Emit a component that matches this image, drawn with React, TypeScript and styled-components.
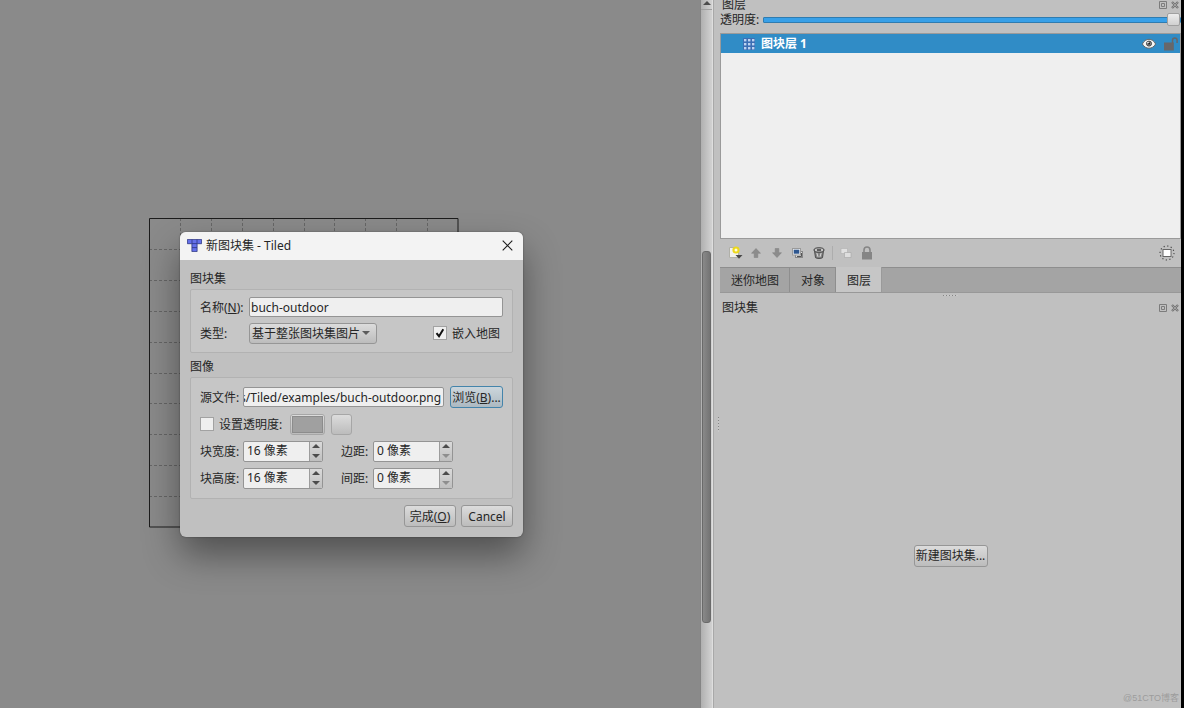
import React, { useLayoutEffect, useRef, useState } from "react";
import styled, { createGlobalStyle, css } from "styled-components";

const GlobalStyle = createGlobalStyle`
  *, *::before, *::after { box-sizing: border-box; }
  html, body, #root { height: 100%; }
  body { margin: 0; background: #c0c0c0; overflow: hidden; }
  body, button, input, select {
    font-family: "Noto Sans", "Noto Sans CJK SC", sans-serif;
    font-size: 12px;
    line-height: 18px;
    color: #262626;
  }
`;

const raised = css`
  border: 1px solid #969696;
  border-radius: 3px;
  background: linear-gradient(#dcdcdc, #bcbcbc);
`;

const Window = styled.main`
  display: grid;
  grid-template-columns: minmax(0, 1fr) 13px 468px 3px;
  height: 100vh;
  background: #c0c0c0;
`;

const Canvas = styled.section`
  position: relative;
  background: #8a8a8a;
`;

const MapGrid = styled.svg`
  position: absolute;
  left: 149px;
  top: 218px;
`;

const ScrollColumn = styled.div`
  display: flex;
  flex-direction: column;
  border-left: 1px solid #858585;
  border-right: 1px solid #dedede;
  background: linear-gradient(90deg, #b0b0b0, #d2d2d2);
`;

const ScrollArrow = styled.button`
  height: 10px;
  padding: 1px 0 0;
  border: 0;
  border-bottom: 1px solid #a0a0a0;
  background: transparent;
  display: flex;
  justify-content: center;
  align-items: flex-start;
`;

const ScrollThumb = styled.div`
  margin: 241px 1px 0;
  height: 372px;
  border: 1px solid #6a6a6a;
  border-radius: 3px;
  background: linear-gradient(90deg, #898989, #747474);
`;

const ScreenEdge = styled.div`
  background: #000;
`;

const Docks = styled.div`
  display: grid;
  grid-template-columns: 6px minmax(0, 1fr);
  border-left: 1px solid #a8a8a8;
`;

const DockHandle = styled.div`
  padding: 417px 0 0 2px;
`;

const Grip = styled.div<{ $vertical?: boolean }>`
  align-self: center;
  justify-self: center;
  width: ${(p) => (p.$vertical ? "1px" : "15px")};
  height: ${(p) => (p.$vertical ? "15px" : "1px")};
  background: repeating-linear-gradient(
    ${(p) => (p.$vertical ? "180deg" : "90deg")},
    #858585 0 1px,
    #c8c8c8 1px 3px
  );
`;

const DockStack = styled.div`
  display: flex;
  flex-direction: column;
  min-width: 0;
`;

const DockHeader = styled.header<{ $short?: boolean }>`
  display: flex;
  align-items: center;
  justify-content: space-between;
  height: ${(p) => (p.$short ? "9px" : "19px")};
  padding: 0 2px;
`;

const DockTitle = styled.h2`
  margin: 0;
  font-size: 12px;
  font-weight: 400;
`;

const DockButtons = styled.div`
  display: flex;
  gap: 4px;
`;

const IconButton = styled.button<{ $size: number }>`
  display: flex;
  align-items: center;
  justify-content: center;
  width: ${(p) => p.$size}px;
  height: ${(p) => p.$size}px;
  padding: 0;
  border: 0;
  background: transparent;
`;

const OpacityRow = styled.label`
  display: flex;
  align-items: center;
  gap: 4px;
  height: 21px;
  margin-bottom: 3px;
`;

const Slider = styled.input`
  flex: 1;
  min-width: 0;
  height: 14px;
  margin: 0;
  appearance: none;
  background: transparent;
  &::-webkit-slider-runnable-track {
    height: 6px;
    border: 1px solid #2f7cb0;
    border-radius: 1px;
    background: #38a0e8;
  }
  &::-webkit-slider-thumb {
    appearance: none;
    width: 13px;
    height: 13px;
    margin-top: -5px;
    border: 1px solid #a0a0a0;
    border-radius: 2px;
    background: linear-gradient(#ececec, #d0d0d0);
  }
`;

const LayerList = styled.ul`
  margin: 0;
  padding: 0;
  height: 206px;
  list-style: none;
  border: 1px solid #9a9a9a;
  background: #efefef;
`;

const LayerItem = styled.li`
  display: flex;
  align-items: center;
  height: 19px;
  padding: 0 2px 0 22px;
  background: #308cc6;
  color: #fff;
  font-weight: 700;
`;

const LayerName = styled.span`
  flex: 1;
  padding-left: 6px;
`;

const LayerToggles = styled.div`
  display: flex;
  gap: 8px;
`;

const Toolbar = styled.div`
  display: flex;
  align-items: center;
  height: 28px;
  padding: 0 6px 0 7px;
  gap: 5px;
`;

const ToolSeparator = styled.span`
  width: 1px;
  height: 14px;
  background: #adadad;
`;

const Spacer = styled.span`
  flex: 1;
`;

const TabBar = styled.div`
  display: flex;
  height: 26px;
  background: #a4a4a4;
  border-top: 1px solid #8e8e8e;
  border-bottom: 1px solid #989898;
`;

const Tab = styled.button<{ $active?: boolean }>`
  margin: ${(p) => (p.$active ? "-1px 0 0" : "0")};
  padding: ${(p) => (p.$active ? "2px" : "1px")} 10px 0 11px;
  border: 0;
  border-right: 1px solid ${(p) => (p.$active ? "#9a9a9a" : "#8e8e8e")};
  background: ${(p) => (p.$active ? "#c6c6c6" : "#a4a4a4")};
`;

const DockSplitter = styled.div`
  display: grid;
  height: 5px;
`;

const TilesetArea = styled.div`
  flex: 1;
  display: flex;
  align-items: center;
  justify-content: center;
  padding-top: 86px;
  position: relative;
`;

const PushButton = styled.button<{ $focused?: boolean; $width: number }>`
  ${raised}
  flex: none;
  display: flex;
  align-items: center;
  justify-content: center;
  height: 22px;
  padding: 1px 0 0;
  white-space: nowrap;
  width: ${(p) => p.$width}px;
  ${(p) =>
    p.$focused &&
    css`
      border-color: #4484ab;
      background: linear-gradient(#ccd6dc, #adb9c1);
    `}
`;

const Watermark = styled.small`
  position: absolute;
  right: 2px;
  bottom: 1px;
  font-family: "Liberation Sans", "Noto Sans CJK SC", sans-serif;
  font-size: 9px;
  color: #9c9c9c;
`;

const Dialog = styled.section`
  position: absolute;
  left: 180px;
  top: 232px;
  width: 343px;
  border-radius: 6px;
  overflow: hidden;
  background: #c0c0c0;
  box-shadow: 0 18px 36px rgba(0, 0, 0, 0.42), 0 0 2px rgba(0, 0, 0, 0.4);
`;

const TitleBar = styled.header`
  display: flex;
  align-items: center;
  gap: 4px;
  height: 28px;
  padding: 0 10px 1px 7px;
  background: #f3f3f3;
`;

const DialogTitle = styled.h1`
  flex: 1;
  margin: 0;
  padding-top: 1px;
  font-size: 12px;
  font-weight: 400;
`;

const DialogBody = styled.form`
  padding: 9px 10px 10px;
`;

const Group = styled.fieldset`
  margin: 0;
  padding: 0;
  border: 0;
  min-width: 0;
  & + & {
    margin-top: 4px;
  }
`;

const GroupTitle = styled.legend`
  padding: 1px 0 0;
  height: 20px;
`;

const GroupBox = styled.div<{ $gap: number; $top: number; $bottom: number }>`
  display: flex;
  flex-direction: column;
  gap: ${(p) => p.$gap}px;
  padding: ${(p) => p.$top}px 9px ${(p) => p.$bottom}px;
  border: 1px solid #b2b2b2;
  border-radius: 2px;
  background: #c6c6c6;
`;

const Row = styled.div`
  display: flex;
  align-items: center;
  min-height: 22px;
`;

const FieldLabel = styled.label<{ $width: number }>`
  flex: none;
  width: ${(p) => p.$width}px;
  padding-top: 2px;
  white-space: nowrap;
`;

const TextField = styled.input`
  flex: 1;
  min-width: 0;
  height: 20px;
  padding: 0 2px 0 1px;
  border: 1px solid #949494;
  border-radius: 2px;
  background: #efefef;
`;

const SelectWrap = styled.div`
  position: relative;
  width: 128px;
`;

const Select = styled.select`
  ${raised}
  display: block;
  width: 100%;
  height: 21px;
  padding: 1px 16px 0 2px;
  appearance: none;
`;

const SelectArrow = styled.svg`
  position: absolute;
  right: 7px;
  top: 8px;
  pointer-events: none;
`;

const CheckLabel = styled.label`
  display: flex;
  align-items: center;
  gap: 5px;
  white-space: nowrap;
`;

const CheckText = styled.span`
  padding-top: 1px;
`;

const CheckBox = styled.input`
  appearance: none;
  width: 14px;
  height: 14px;
  margin: 0;
  border: 1px solid #a2a2a2;
  background: #efefef;
  &:checked {
    background: #efefef
      url("data:image/svg+xml,%3Csvg xmlns='http://www.w3.org/2000/svg' viewBox='0 0 12 12'%3E%3Cpath d='M2.5 6.2 5 9.2 9.3 2.2' fill='none' stroke='%23111' stroke-width='2'/%3E%3C/svg%3E");
  }
`;

const ColorButton = styled.button<{ $swatch?: boolean }>`
  ${raised}
  width: ${(p) => (p.$swatch ? "35px" : "21px")};
  height: 21px;
  padding: 1px;
  border-color: #a6a6a6;
`;

const Swatch = styled.span`
  display: block;
  height: 17px;
  border: 1px solid #8c8c8c;
  background: #a0a0a0;
`;

const SpinBox = styled.div`
  display: grid;
  grid-template-columns: minmax(0, 1fr) 13px;
  width: 80px;
  height: 21px;
  border: 1px solid #949494;
  border-radius: 2px;
  overflow: hidden;
  background: #efefef;
`;

const SpinInput = styled.input`
  width: 100%;
  padding: 0 3px;
  border: 0;
  background: transparent;
`;

const SpinButtons = styled.div`
  display: flex;
  flex-direction: column;
  border-left: 1px solid #9c9c9c;
  background: linear-gradient(#dadada, #bfbfbf);
`;

const SpinButton = styled.button`
  flex: 1;
  display: flex;
  align-items: center;
  justify-content: center;
  padding: 0;
  border: 0;
  background: transparent;
`;

const DialogFooter = styled.footer`
  display: flex;
  justify-content: flex-end;
  gap: 5px;
  padding-top: 6px;
`;

const PushedRight = styled.div`
  margin-left: auto;
  padding-right: 3px;
`;

const SourceField = styled(TextField)`
  margin-right: 6px;
  padding-left: 0;
`;

const TransparencyRow = styled(Row)`
  gap: 6px;
  & > ${CheckLabel} {
    margin-right: 2px;
  }
`;

const SecondLabel = styled(FieldLabel)`
  margin-left: 18px;
`;

const Triangle = ({ down, faint }: { down?: boolean; faint?: boolean }) => (
  <svg width="8" height="4" viewBox="0 0 8 4" aria-hidden="true">
    <path d={down ? "M0 0h8L4 4z" : "M0 4h8L4 0z"} fill={faint ? "#8e8e8e" : "#4c4c4c"} />
  </svg>
);

const FloatIcon = () => (
  <svg width="8" height="8" viewBox="0 0 8 8" fill="none" stroke="#7c7c7c">
    <path d="M.5.5h7v7h-7z" />
    <path d="M2.5 2.5h3v3h-3z" />
  </svg>
);

const DockCloseIcon = () => (
  <svg width="8" height="8" viewBox="0 0 8 8" fill="none">
    <path d="M1 1l6 6M7 1L1 7" stroke="#747474" strokeWidth="2.4" />
    <path d="M1.4 1.4l5.2 5.2M6.6 1.4L1.4 6.6" stroke="#b4b4b4" strokeWidth=".7" />
  </svg>
);

const TileLayerIcon = () => (
  <svg width="12" height="12" viewBox="0 0 12 12" aria-hidden="true">
    <rect width="12" height="12" rx="1" fill="#3c6eb4" />
    {[1, 5, 9].map((y) =>
      [1, 5, 9].map((x) => <rect key={`${x}-${y}`} x={x} y={y} width="2.4" height="2.4" fill="#bcd2f0" />)
    )}
  </svg>
);

const EyeIcon = () => (
  <svg width="14" height="14" viewBox="0 0 14 14">
    <path d="M.4 7C3.2.8 10.8.8 13.6 7 10.8 12.6 3.2 12.6.4 7z" fill="#f6f6f4" stroke="#5c5c5c" strokeWidth=".9" />
    <circle cx="7" cy="6.6" r="2.5" fill="#8a8a8a" stroke="#444" />
    <circle cx="7" cy="6.6" r="1.1" fill="#222" />
    <circle cx="6" cy="5.6" r=".8" fill="#fff" />
  </svg>
);

const UnlockIcon = () => (
  <svg width="14" height="14" viewBox="0 0 14 14">
    <path d="M8.5 7V3.3a2.3 2.3 0 0 1 4.6 0V6" fill="none" stroke="#67676a" strokeWidth="1.5" />
    <rect y="5.5" width="9.8" height="8" fill="#67676a" />
  </svg>
);

const NewLayerIcon = () => (
  <svg width="16" height="16" viewBox="0 0 16 16">
    <path d="M2.5 2.5h9v10h-9z" fill="#f2f2ee" stroke="#b0b0a8" />
    <circle cx="9" cy="5" r="3.6" fill="#ecd81c" />
    <circle cx="9" cy="5" r="1.5" fill="#fffde0" />
    <path d="M8.5 10h7L12 13.8z" fill="#484848" />
  </svg>
);

const ArrowIcon = ({ down }: { down?: boolean }) => (
  <svg width="10" height="10" viewBox="0 0 10 10">
    <path
      d={down ? "M3.2.5h3.6v4.2h2.7L5 9.5.5 4.7h2.7z" : "M3.2 9.5h3.6V5.3h2.7L5 .5.5 5.3h2.7z"}
      fill="#8c8c8c"
      stroke="#7e7e7e"
      strokeWidth=".5"
    />
  </svg>
);

const DuplicateIcon = () => (
  <svg width="12" height="12" viewBox="0 0 12 12">
    <rect x="3.5" y="4.5" width="7" height="6" fill="#dcdcdc" stroke="#888" />
    <path d="M5 9.5h4.5V6" fill="none" stroke="#555" />
    <rect x=".5" y="1.5" width="8" height="6.5" fill="#f0f0f0" stroke="#9a9a9a" />
    <rect x="1.7" y="2.7" width="5.6" height="4" fill="#2d568f" />
  </svg>
);

const TrashIcon = () => (
  <svg width="12" height="12" viewBox="0 0 12 12">
    <path d="M1.5 3.5l1 7.2c1.5 1 5.5 1 7 0l1-7.2z" fill="#858585" stroke="#4a4a4a" />
    <path d="M3.8 5.8l1.2 4M8.2 5.8l-1.2 4" stroke="#dadada" />
    <ellipse cx="6" cy="3" rx="5" ry="2.2" fill="#c4c4c4" stroke="#3a3a3a" />
    <path d="M4 3h4" stroke="#333" strokeWidth="1.4" />
  </svg>
);

const OthersIcon = () => (
  <svg width="12" height="12" viewBox="0 0 12 12">
    <path d="M1 1.5h6.5v5H1z" fill="#e0e0e0" stroke="#b0b0b0" strokeWidth=".6" />
    <path d="M4.5 5.5H11v5H4.5z" fill="#dedede" stroke="#a4a4a4" strokeWidth=".6" />
  </svg>
);

const LockIcon = () => (
  <svg width="12" height="14" viewBox="0 0 12 14">
    <path d="M3 7V4a3 3 0 0 1 6 0v3" fill="none" stroke="#858585" strokeWidth="1.6" />
    <rect x="1" y="6" width="10" height="7.5" fill="#858585" />
  </svg>
);

const HighlightIcon = () => (
  <svg width="16" height="16" viewBox="0 0 16 16" fill="none">
    <circle cx="8" cy="8" r="7" stroke="#444" strokeWidth="1.1" strokeDasharray="1.2 2.46" />
    <rect x="4" y="4.5" width="8" height="7" fill="#fff" stroke="#666" />
  </svg>
);

const TiledLogo = () => (
  <svg width="15" height="13" viewBox="0 0 15 13" aria-hidden="true">
    <path d="M.4.4h14.2v4.3h-4.5v7.9H4.9V4.7H.4z" fill="#6470ea" stroke="#2c3580" strokeWidth=".8" />
    <path d="M5 .5v4M10 .5v4M5 4.6h5M5 8.6h5" stroke="#2c3580" strokeWidth=".8" />
  </svg>
);

const CloseIcon = () => (
  <svg width="11" height="11" viewBox="0 0 11 11">
    <path d="M.7.7l9.6 9.6M10.3.7L.7 10.3" stroke="#1c1c1c" strokeWidth="1.1" />
  </svg>
);

function Spin({ id, value }: { id: string; value: number }) {
  const [amount, setAmount] = useState(value);
  return (
    <SpinBox>
      <SpinInput id={id} value={`${amount} 像素`} readOnly />
      <SpinButtons>
        <SpinButton type="button" aria-label="增加" onClick={() => setAmount(amount + 1)}>
          <Triangle />
        </SpinButton>
        <SpinButton type="button" aria-label="减少" onClick={() => setAmount(Math.max(0, amount - 1))}>
          <Triangle down faint={amount === 0} />
        </SpinButton>
      </SpinButtons>
    </SpinBox>
  );
}

function NewTilesetDialog() {
  const source = useRef<HTMLInputElement>(null);
  useLayoutEffect(() => {
    if (source.current) source.current.scrollLeft = source.current.scrollWidth;
  }, []);

  return (
    <Dialog role="dialog" aria-labelledby="dialog-title">
      <TitleBar>
        <TiledLogo />
        <DialogTitle id="dialog-title">新图块集 - Tiled</DialogTitle>
        <IconButton type="button" $size={11} aria-label="关闭">
          <CloseIcon />
        </IconButton>
      </TitleBar>
      <DialogBody onSubmit={(e) => e.preventDefault()}>
        <Group>
          <GroupTitle>图块集</GroupTitle>
          <GroupBox $gap={4} $top={6} $bottom={8}>
            <Row>
              <FieldLabel $width={49} htmlFor="name">
                名称(<u>N</u>):
              </FieldLabel>
              <TextField id="name" defaultValue="buch-outdoor" />
            </Row>
            <Row>
              <FieldLabel $width={49} htmlFor="type">
                类型:
              </FieldLabel>
              <SelectWrap>
                <Select id="type">
                  <option>基于整张图块集图片</option>
                </Select>
                <SelectArrow width="8" height="4" viewBox="0 0 8 4">
                  <path d="M0 0h8L4 4z" fill="#5c5c5c" />
                </SelectArrow>
              </SelectWrap>
              <PushedRight>
                <CheckLabel>
                  <CheckBox type="checkbox" defaultChecked />
                  <CheckText>嵌入地图</CheckText>
                </CheckLabel>
              </PushedRight>
            </Row>
          </GroupBox>
        </Group>
        <Group>
          <GroupTitle>图像</GroupTitle>
          <GroupBox $gap={5} $top={8} $bottom={9}>
            <Row>
              <FieldLabel $width={43} htmlFor="source">
                源文件:
              </FieldLabel>
              <SourceField id="source" ref={source} defaultValue="s/Tiled/examples/buch-outdoor.png" />
              <PushButton type="button" $focused $width={53}>
                浏览(<u>B</u>)...
              </PushButton>
            </Row>
            <TransparencyRow>
              <CheckLabel>
                <CheckBox type="checkbox" />
                <CheckText>设置透明度:</CheckText>
              </CheckLabel>
              <ColorButton type="button" $swatch aria-label="透明色">
                <Swatch />
              </ColorButton>
              <ColorButton type="button" aria-label="拾取颜色" />
            </TransparencyRow>
            <Row>
              <FieldLabel $width={43} htmlFor="tile-width">
                块宽度:
              </FieldLabel>
              <Spin id="tile-width" value={16} />
              <SecondLabel $width={32} htmlFor="margin">
                边距:
              </SecondLabel>
              <Spin id="margin" value={0} />
            </Row>
            <Row>
              <FieldLabel $width={43} htmlFor="tile-height">
                块高度:
              </FieldLabel>
              <Spin id="tile-height" value={16} />
              <SecondLabel $width={32} htmlFor="spacing">
                间距:
              </SecondLabel>
              <Spin id="spacing" value={0} />
            </Row>
          </GroupBox>
        </Group>
        <DialogFooter>
          <PushButton type="submit" $width={52}>
            完成(<u>O</u>)
          </PushButton>
          <PushButton type="button" $width={52}>
            Cancel
          </PushButton>
        </DialogFooter>
      </DialogBody>
    </Dialog>
  );
}

const DockActions = () => (
  <DockButtons>
    <IconButton $size={8} aria-label="浮动">
      <FloatIcon />
    </IconButton>
    <IconButton $size={8} aria-label="关闭面板">
      <DockCloseIcon />
    </IconButton>
  </DockButtons>
);

const cells = [1, 2, 3, 4, 5, 6, 7, 8, 9];

export default function App() {
  return (
    <>
      <GlobalStyle />
      <Window>
        <Canvas>
          <MapGrid width="310" height="310" viewBox="0 0 310 310" fill="none">
            {cells.map((i) => (
              <path
                key={i}
                d={`M${Math.round(i * 30.9)}.5 0v309M0 ${Math.round(i * 30.9)}.5h309`}
                stroke="#666"
                strokeDasharray="3 2"
              />
            ))}
            <path d="M.5.5h308.5v308.5H.5z" stroke="#1c1c1c" />
          </MapGrid>
          <NewTilesetDialog />
        </Canvas>
        <ScrollColumn>
          <ScrollArrow aria-label="向上滚动">
            <Triangle />
          </ScrollArrow>
          <ScrollThumb />
        </ScrollColumn>
        <Docks>
          <DockHandle>
            <Grip $vertical />
          </DockHandle>
          <DockStack>
            <DockHeader $short>
              <DockTitle>图层</DockTitle>
              <DockActions />
            </DockHeader>
            <OpacityRow>
              透明度:
              <Slider type="range" min={0} max={100} defaultValue={100} />
            </OpacityRow>
            <LayerList>
              <LayerItem>
                <TileLayerIcon />
                <LayerName>图块层 1</LayerName>
                <LayerToggles>
                  <IconButton $size={14} aria-label="可见">
                    <EyeIcon />
                  </IconButton>
                  <IconButton $size={14} aria-label="锁定">
                    <UnlockIcon />
                  </IconButton>
                </LayerToggles>
              </LayerItem>
            </LayerList>
            <Toolbar>
              <IconButton $size={16} aria-label="新建图层"><NewLayerIcon /></IconButton>
              <IconButton $size={16} aria-label="上移"><ArrowIcon /></IconButton>
              <IconButton $size={16} aria-label="下移"><ArrowIcon down /></IconButton>
              <IconButton $size={16} aria-label="复制图层"><DuplicateIcon /></IconButton>
              <IconButton $size={16} aria-label="删除图层"><TrashIcon /></IconButton>
              <ToolSeparator />
              <IconButton $size={16} aria-label="隐藏其他图层"><OthersIcon /></IconButton>
              <IconButton $size={16} aria-label="锁定其他图层"><LockIcon /></IconButton>
              <Spacer />
              <IconButton $size={16} aria-label="突出显示当前图层"><HighlightIcon /></IconButton>
            </Toolbar>
            <TabBar role="tablist">
              <Tab role="tab">迷你地图</Tab>
              <Tab role="tab">对象</Tab>
              <Tab role="tab" $active aria-selected>图层</Tab>
            </TabBar>
            <DockSplitter>
              <Grip />
            </DockSplitter>
            <DockHeader>
              <DockTitle>图块集</DockTitle>
              <DockActions />
            </DockHeader>
            <TilesetArea>
              <PushButton type="button" $width={74}>新建图块集...</PushButton>
              <Watermark>@51CTO博客</Watermark>
            </TilesetArea>
          </DockStack>
        </Docks>
        <ScreenEdge />
      </Window>
    </>
  );
}
